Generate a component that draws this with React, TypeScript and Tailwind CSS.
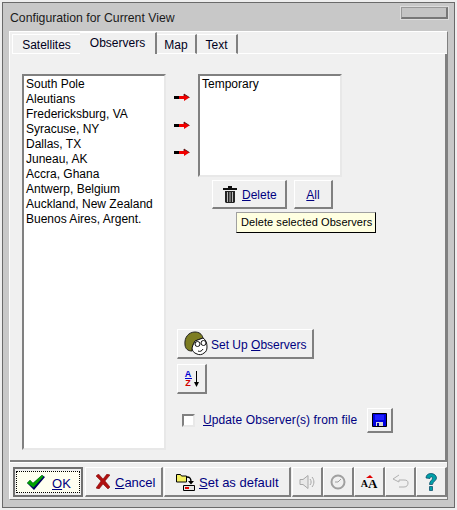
import type { ReactNode } from "react";

const PLACES = ["South Pole", "Aleutians", "Fredericksburg, VA", "Syracuse, NY", "Dallas, TX", "Juneau, AK", "Accra, Ghana", "Antwerp, Belgium", "Auckland, New Zealand", "Buenos Aires, Argent."];

const raised = "border-t border-l border-r-2 border-b-2 border-t-white border-l-white border-r-[#808080] border-b-[#808080] bg-[#f0f0f0]";
const sunken = "border-2 border-t-[#808080] border-l-[#808080] border-r-[#e8e8e8] border-b-[#e8e8e8] bg-white";

function Btn({ className, children }: { className: string; children: ReactNode }) {
  return <button className={`${raised} flex shrink-0 items-center text-[#000080] ${className}`}>{children}</button>;
}

function RedArrow() {
  return (
    <svg width="16" height="9" viewBox="0 0 16 9">
      <path d="M0 3h5v3H0z" fill="#000" />
      <path d="M5 3h5V1l5.500 3.500L10 8V6H5z" fill="#f00000" />
      <path d="M10 3V1l5.500 3.500" fill="none" stroke="#300" strokeWidth="0.7" />
    </svg>
  );
}

function Trash() {
  return (
    <svg width="14" height="17" viewBox="0 0 14 17">
      <path d="M5 0h4v2h5v2H0V2h5z" fill="#111" />
      <path d="M2 5h10v11l-1 1H3l-1-1z" fill="#222" />
      <path d="M4.500 6v10M7 6v10M9.500 6v10" stroke="#bbb" />
    </svg>
  );
}

function Observer() {
  return (
    <svg width="24" height="25" viewBox="0 0 24 25">
      <path d="M1 14C0 6 5 1 11 1c4 0 7 2 8 6l-8 3-2 4-1 6C4 20 1.500 18 1 14z" fill="#7d7d22" stroke="#222" />
      <path d="M11 10l8-3c3 2 4 5 4 9 0 3-1 5-3 6-2 2-5 2-7 1-3-1-5-3-5-6l1-3z" fill="#fff" stroke="#111" />
      <ellipse cx="13.500" cy="13" rx="2.500" ry="2.500" fill="#fff" stroke="#111" />
      <ellipse cx="19.500" cy="12" rx="2.500" ry="2.500" fill="#fff" stroke="#111" />
      <path d="M14 20c2 1 4 0 5-2" stroke="#111" fill="none" />
    </svg>
  );
}

function SortAz() {
  return (
    <div className="flex items-center gap-[2px]">
      <div className="flex w-[7px] flex-col items-center text-[9px] leading-[8px] font-bold">
        <span className="w-[7px] border-b border-[#0000d0] text-center text-[#0000d0]">A</span>
        <span className="text-[#d00000]">Z</span>
      </div>
      <svg width="5" height="16" viewBox="0 0 5 16">
        <path d="M2.500 0v12" stroke="#000" />
        <path d="M0 11h5l-2.500 5z" fill="#000" />
      </svg>
    </div>
  );
}

function Floppy() {
  return (
    <svg width="15" height="14" viewBox="0 0 15 14">
      <path d="M.5.500h14v13H.5z" fill="#0000e0" stroke="#000" />
      <path d="M3 2h9v5H3z" fill="#2020ff" />
      <path d="M4 9h7v4H4z" fill="#d8d8d8" />
      <path d="M5 10h2v3H5z" fill="#0000a0" />
    </svg>
  );
}

function Check() {
  return (
    <svg width="18" height="15" viewBox="0 0 18 15">
      <path d="M0 8l3-3 3 3 9-8 3 2L7 15z" fill="#000060" />
      <path d="M0 8l3-3 3 3 9-8 1.500 1.500L6.500 12.500z" fill="#00a000" />
    </svg>
  );
}

function Cross() {
  return (
    <svg width="14" height="15" viewBox="0 0 14 15">
      <path d="M0 2l2.500-2L7 5l4-5 3 1-5 6 5 6-2 2-5-5-4 5-3-1 5-7z" fill="#b01010" stroke="#700" strokeWidth="0.5" />
    </svg>
  );
}

function SetDefault() {
  return (
    <svg width="20" height="18" viewBox="0 0 20 18">
      <path d="M.5 1.500h4l1 1.500h5v6H.5z" fill="#f4f060" stroke="#000" />
      <path d="M11 4c3 0 4 1 4 5" fill="none" stroke="#000" strokeWidth="1.500" />
      <path d="M12 8h6l-3 3.500z" fill="#000" />
      <path d="M7.500 12.500h11v5h-11z" fill="#e4e4e4" stroke="#000" />
      <path d="M9 14h4v2H9z" fill="#e00000" />
    </svg>
  );
}

function Speaker() {
  return (
    <svg width="17" height="16" viewBox="0 0 17 16" fill="none" stroke="#a8a8a8">
      <path d="M1 5.500h3L9 1.500v13L4 10.500H1z" fill="#e8e8e8" />
      <path d="M11 5c1.500 2 1.500 4 0 6M13 3c2.500 3 2.500 7 0 10" />
    </svg>
  );
}

function Clock() {
  return (
    <svg width="16" height="16" viewBox="0 0 16 16" fill="none" stroke="#a0a0a0">
      <circle cx="8" cy="8" r="6.500" strokeWidth="2" />
      <path d="M8 8l3-3M8 8H5" />
    </svg>
  );
}

function Font() {
  return (
    <div className="flex flex-col items-center text-black">
      <svg width="7" height="3" viewBox="0 0 7 3" className="ml-[1px]">
        <path d="M0 3l4-3 3 3z" fill="#e00000" />
      </svg>
      <div className="flex items-end font-['Liberation_Serif',serif] leading-[11px] font-bold">
        <span className="text-[10px]">A</span>
        <span className="text-[13px]">A</span>
      </div>
    </div>
  );
}

function Back() {
  return (
    <svg width="17" height="15" viewBox="0 0 17 15" fill="none" stroke="#b0b0b0">
      <path d="M7 1L1 5l6 3V6h5c3 0 4 1 4 3s-1 4-4 4H7" />
    </svg>
  );
}

function Help() {
  return (
    <svg width="12" height="18" viewBox="0 0 12 18">
      <path d="M1 5C1 2 3 .5 6 .5s5.500 2 5.500 4.500-3.500 3.500-4 6.500h-3c0-4 3-4 3-6.500 0-1.500-2.500-1.500-2.500.500z" fill="#00a0a8" stroke="#004060" strokeWidth="0.7" />
      <path d="M4.500 13.500h3v4h-3z" fill="#00a0a8" stroke="#004060" strokeWidth="0.7" />
    </svg>
  );
}

export default function App() {
  return (
    <div className="h-[510px] w-[457px] bg-[#eeeeee] pt-[2px] pl-[2px] font-['Liberation_Sans',sans-serif] text-[12px] leading-[15px] text-black">
      <div className="flex h-[506px] w-[453px] flex-col border border-[#6a6a6a] bg-[#c8c8c8] px-[6px]">
        <div className="flex h-[28px] shrink-0 items-center justify-between">
          <span className="mt-[2px] ml-px text-[12.25px] text-[#1a1a1a]">Configuration for Current View</span>
          <div className="mb-[8px] h-[12px] w-[47px] border border-r-2 border-b-2 border-t-[#999] border-l-[#999] border-r-[#777] border-b-[#777] bg-[#c4c4c4] outline outline-[#dddddd]" />
        </div>

        <div className="flex h-[469px] shrink-0 flex-col border border-t-white border-l-white border-r-[#808080] border-b-[#808080] bg-[#f0f0f0]">
          <div className="flex h-[22px] shrink-0 items-end pl-[2px] text-[#000020]">
            <div className="flex h-[20px] w-[68px] items-center justify-center border-t border-l border-b border-white pt-[2px]">Satellites</div>
            <div className="relative z-10 flex h-[22px] w-[77px] items-center justify-center border-t border-white border-r-2 border-r-[#808080] pb-[1px]">Observers</div>
            <div className="flex h-[20px] w-[40px] items-center justify-center border-t border-b border-white border-r-2 border-r-[#808080] pt-[2px]">Map</div>
            <div className="flex h-[20px] w-[41px] items-center justify-center border-t border-b border-white border-r-2 border-r-[#808080] pt-[2px]">Text</div>
            <div className="flex-1 border-b border-white" />
          </div>

          <div className="flex h-[408px] shrink-0 border-r-2 border-b-2 border-r-[#808080] border-b-[#808080] pt-[20px] pl-[12px]">
            <div className={`${sunken} h-[376px] w-[144px] pl-[2px] pt-[1px]`}>
              {PLACES.map((p) => <div key={p}>{p}</div>)}
            </div>

            <div className="ml-[8px] flex w-[24px] flex-col gap-[18.500px] pt-[19px]">
              <RedArrow />
              <RedArrow />
              <RedArrow />
            </div>

            <div className="relative flex flex-1 flex-col">
              <div className={`${sunken} h-[103px] w-[144px] pl-[2px] pt-[1px]`}>Temporary</div>

              <div className="mt-[3px] ml-[14px] flex gap-[7px]">
                <Btn className="h-[29px] w-[75px] gap-[5px] pl-[10px]"><Trash /><span className="mt-[2px]"><u>D</u>elete</span></Btn>
                <Btn className="h-[29px] w-[39px] justify-center"><span className="mt-[2px]"><u>A</u>ll</span></Btn>
              </div>

              <div className="absolute top-[138px] left-[38px] flex h-[21px] w-[140px] items-center whitespace-nowrap border border-t-[#a0a0a0] border-l-[#a0a0a0] border-r-black border-b-black bg-[#ffffe1] pl-[4px] text-[11px] tracking-[0.07px]">Delete selected Observers</div>

              <div className="mt-[120px] -ml-[21px]">
                <Btn className="h-[30px] w-[137px] gap-[3px] pl-[6px]"><Observer /><span className="mt-[3px]">Set Up <u>O</u>bservers</span></Btn>
                <Btn className="mt-[5px] h-[30px] w-[30px] justify-center"><SortAz /></Btn>
                <div className="mt-[14px] flex h-[25px] items-center">
                  <div className={`${sunken} ml-[5px] h-[13px] w-[13px] border`} />
                  <span className="ml-[8px] tracking-[0.1px] text-[#000080]"><u>U</u>pdate Observer(s) from file</span>
                  <Btn className="ml-[10px] h-[25px] w-[26px] justify-center"><Floppy /></Btn>
                </div>
              </div>
            </div>
          </div>

          <div className="flex flex-1 items-start border-t border-white pt-[4px] pl-[3px] text-[13px]">
            <button className="flex h-[30px] w-[70px] shrink-0 items-center justify-center border-2 border-[#707070] bg-[#f0f0f0] text-[#000080]">
              <div className="flex h-[22px] w-[64px] items-center gap-[7px] border border-dotted border-black bg-[#fffff0] pl-[10px]">
                <Check /><span className="mt-[2px]"><u>O</u>K</span>
              </div>
            </button>
            <Btn className="ml-[2px] h-[30px] w-[78px] gap-[5px] pl-[10px]"><Cross /><span className="mt-[2px]"><u>C</u>ancel</span></Btn>
            <Btn className="ml-[1px] h-[30px] w-[127px] gap-[3px] pl-[11px]"><SetDefault /><span className="mt-[2px]"><u>S</u>et as default</span></Btn>
            <Btn className="ml-[1px] h-[30px] w-[31px] justify-center"><Speaker /></Btn>
            <Btn className="h-[30px] w-[31px] justify-center"><Clock /></Btn>
            <Btn className="h-[30px] w-[31px] justify-center"><Font /></Btn>
            <Btn className="h-[30px] w-[31px] justify-center"><Back /></Btn>
            <Btn className="h-[30px] w-[31px] justify-center"><Help /></Btn>
          </div>
        </div>
      </div>
    </div>
  );
}
